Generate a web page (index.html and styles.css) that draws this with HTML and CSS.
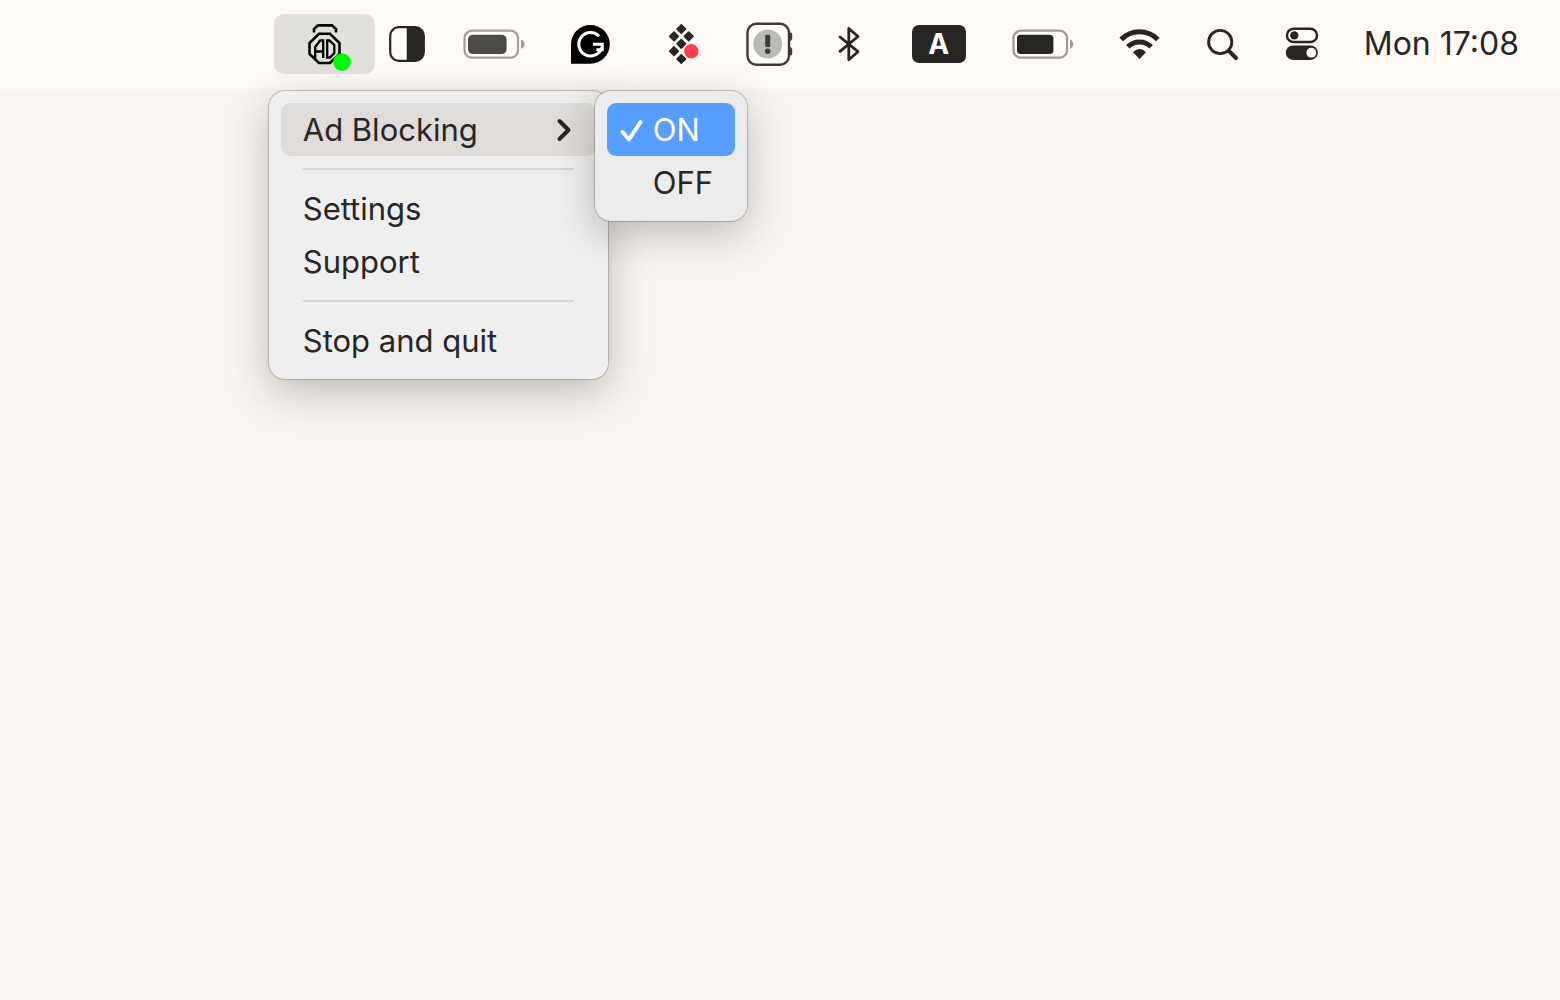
FILE: index.html
```html
<!DOCTYPE html>
<html lang="en">
<head>
    <meta charset="UTF-8">
    <title>Ad Blocking</title>
    <link rel="stylesheet" href="styles.css">
</head>
<body>
    <header class="menubar">
        <div class="tray-app">
            <button class="tray-btn active" type="button" aria-label="Ad blocker" aria-expanded="true">
                <svg width="35" height="42" viewBox="0 0 35 42" fill="none" stroke="#000" stroke-width="2.6">
                    <path d="M7 9.500V6l4-3.600h14L29 6v3.500"/>
                    <path d="M12 10.800h11L32.500 20v11L23 40H12L2.500 31V20z"/>
                    <path stroke-width="2.300" d="M8.200 35V24l5-6.500h3V35M8.200 28.500h8M20.200 17.500h2.300L27.300 22v8l-4.300 4.500h-2.800z"/>
                    <circle cx="35" cy="39" r="8.800" fill="#00fb00" stroke="none"/>
                </svg>
            </button>
            <ul class="menu">
                <li class="has-sub">
                    <button class="menu-item open" type="button" aria-expanded="true">
                        Ad Blocking
                        <svg class="arrow" width="19" height="24" viewBox="0 0 19 24" fill="none" stroke="#272625" stroke-width="4" stroke-linecap="round" stroke-linejoin="round">
                            <path d="M4.500 3l9 9-9 9"/>
                        </svg>
                    </button>
                    <ul class="menu submenu">
                        <li>
                            <button class="menu-item selected" type="button">
                                <svg class="check" width="24" height="24" viewBox="0 0 24 24" fill="none" stroke="#fff" stroke-width="4" stroke-linecap="round" stroke-linejoin="round">
                                    <path d="M2.500 14l6.500 7.500L20.500 4"/>
                                </svg>
                                ON
                            </button>
                        </li>
                        <li><button class="menu-item" type="button">OFF</button></li>
                    </ul>
                </li>
                <li><hr></li>
                <li><button class="menu-item" type="button">Settings</button></li>
                <li><button class="menu-item" type="button">Support</button></li>
                <li><hr></li>
                <li><button class="menu-item" type="button">Stop and quit</button></li>
            </ul>
        </div>
        <button class="tray-btn compact" type="button" aria-label="Window">
            <svg width="36" height="36" viewBox="0 0 36 36">
                <rect x="1.200" y="1.200" width="33.600" height="33.600" rx="8.500" fill="#fefcf9" stroke="#272625" stroke-width="2.200"/>
                <path fill="#272625" d="M17.700 1H27a8 8 0 0 1 8 8v18a8 8 0 0 1-8 8h-9.300z"/>
            </svg>
        </button>
        <button class="tray-btn" type="button" aria-label="Device battery">
            <svg width="62" height="30" viewBox="0 0 62 30">
                <rect x="1.500" y="1.700" width="53.500" height="27" rx="7.500" fill="#fefcf9" stroke="#a3a09c" stroke-width="2.200"/>
                <rect x="5" y="5.700" width="38.600" height="19.400" rx="5" fill="#4d4b49"/>
                <path fill="#a3a09c" d="M58 10.500q3.600 1.500 3.600 4.700T58 19.800z"/>
            </svg>
        </button>
        <button class="tray-btn" type="button" aria-label="Grammar checker">
            <svg width="39" height="39" viewBox="0 0 39 39">
                <path d="M0 38.700V19.300a19.400 19.400 0 1 1 19.400 19.400z"/>
                <path fill="none" stroke="#fff" stroke-width="3" d="M28 11.200A11.700 11.700 0 1 0 30.800 22.300M22 19.300h10.800M31.300 19.300v5.500h-6"/>
            </svg>
        </button>
        <button class="tray-btn" type="button" aria-label="Setapp">
            <svg width="44" height="42" viewBox="0 0 44 42">
                <path fill="#272625" stroke="#272625" stroke-width="1.600" stroke-linejoin="round" d="M25.300 1.700l4.300 4.300-4.300 4.300L21 6zM18 9.100l4.300 4.300-4.300 4.300-4.300-4.300zM32.700 9.100l4.300 4.300-4.300 4.300-4.300-4.300zM25.300 16.500l4.300 4.300-4.300 4.300-4.300-4.300zM18 23.900l4.300 4.300-4.300 4.300-4.300-4.300zM25.300 31.700l4.300 4.300-4.300 4.300L21 36z"/>
                <circle cx="35.300" cy="28.300" r="7.800" fill="#ff3f4d" stroke="#fef5f0" stroke-width="1.200"/>
            </svg>
        </button>
        <button class="tray-btn" type="button" aria-label="Disk alert">
            <svg width="46" height="44" viewBox="0 0 46 44">
                <path fill="#3d3b3a" d="M43 10.500h1.500q1.700 0 1.700 2v4.500l-1.500 2H43zM43 25h1.700l1.500 2v4.500q0 2-1.700 2H43z"/>
                <rect x="1.500" y="1.700" width="41.500" height="41" rx="9" fill="#fefcf9" stroke="#3d3b3a" stroke-width="2.400"/>
                <circle cx="21.800" cy="22" r="14.500" fill="#bcbab7"/>
                <rect x="19.200" y="12.800" width="5" height="12.200" rx="1" fill="#3d3b3a"/>
                <circle cx="21.700" cy="29.300" r="2.700" fill="#3d3b3a"/>
            </svg>
        </button>
        <button class="tray-btn" type="button" aria-label="Bluetooth">
            <svg width="28" height="36" viewBox="0 0 28 36" fill="none" stroke="#272625" stroke-width="2.800" stroke-linecap="round" stroke-linejoin="round">
                <path d="M2 11l18 14.700-9.200 8V2.500l9.200 8L2 25.300"/>
            </svg>
        </button>
        <button class="tray-btn" type="button" aria-label="Input source A">
            <span class="input-source">A</span>
        </button>
        <button class="tray-btn" type="button" aria-label="Battery">
            <svg width="61" height="30" viewBox="0 0 61 30">
                <rect x="1.500" y="1.700" width="53.500" height="27" rx="7.500" fill="#fefcf9" stroke="#9d9a97" stroke-width="2.200"/>
                <rect x="5" y="5.700" width="36.400" height="19.400" rx="3.500" fill="#272625"/>
                <path fill="#9d9a97" d="M58 10.500q3.200 1.500 3.200 4.700T58 19.800z"/>
            </svg>
        </button>
        <button class="tray-btn" type="button" aria-label="Wi-Fi">
            <svg width="41" height="32" viewBox="0 0 41 32" fill="none" stroke="#272625" stroke-width="5">
                <path d="M2.200 11.500A25.500 25.500 0 0 1 38.800 11.500"/>
                <path d="M8.800 18.800A16.500 16.500 0 0 1 32.200 18.800"/>
                <path fill="#272625" stroke="none" d="M14 24.300q6.500-6.600 13 0l-6.500 6.700z"/>
            </svg>
        </button>
        <button class="tray-btn" type="button" aria-label="Search">
            <svg width="33" height="32" viewBox="0 0 33 32" fill="none" stroke="#272625" stroke-linecap="round">
                <circle cx="14.200" cy="14" r="11.600" stroke-width="2.900"/>
                <path stroke-width="4" d="M23.500 23.500l6.500 6.500"/>
            </svg>
        </button>
        <button class="tray-btn" type="button" aria-label="Control Center">
            <svg width="33" height="34" viewBox="0 0 33 34">
                <rect x="2" y="1.700" width="30" height="13.400" rx="6.700" fill="#fefcf9" stroke="#272625" stroke-width="2.500"/>
                <circle cx="9.300" cy="8.400" r="4.200" fill="#272625"/>
                <rect x=".8" y="18.500" width="32" height="14.400" rx="7.200" fill="#272625"/>
                <circle cx="26.300" cy="25.700" r="4.900" fill="#fefcf9"/>
            </svg>
        </button>
        <button class="tray-btn clock" type="button">Mon 17:08</button>
    </header>
</body>
</html>
```
FILE: styles.css
```css
*{
    box-sizing: border-box;
    padding:0;
    margin:0;
}
body{
    min-height:100vh;
    background: #faf5f0;
    color:#272625;
    font-family: Inter, "Liberation Sans", sans-serif;
    font-size:31px;
    line-height:36px;
}
ul{
    list-style: none;
}
button{
    border:0;
    background: none;
    color:inherit;
    font:inherit;
    text-align: left;
    white-space: nowrap;
}
svg{
    display: block;
    flex-shrink: 0;
    overflow: visible;
}
.menubar{
    display: flex;
    justify-content: flex-end;
    align-items: center;
    padding:14px 18px 15px;
    background: #fefaf5;
}
.tray-app{
    position: relative;
}
.tray-btn{
    display: flex;
    align-items: center;
    height:60px;
    padding:0 23px;
}
.tray-btn.active{
    padding:0 33px;
    border-radius: 10px;
    background: #e2e0dc;
}
.tray-btn.compact{
    padding:0 15px 0 14px;
}
.tray-btn.clock{
    font-size:32px;
}
.input-source{
    width:54px;
    height:38px;
    border-radius: 7px;
    background: #272625;
    color:#fff;
    font-size:28px;
    font-weight: 700;
    line-height:38px;
    text-align: center;
}
.menu{
    position: absolute;
    top:77px;
    left:-5px;
    width:339px;
    padding:12px;
    border-radius: 16px;
    background: #efefef;
    box-shadow: 0 0 0 1px rgba(0,0,0,.2), 0 12px 40px rgba(40,30,25,.28);
}
.has-sub{
    position: relative;
}
.menu .submenu{
    top:-12px;
    left:314px;
    width:152px;
    background: #ececec;
}
.menu-item{
    display: flex;
    align-items: center;
    width:100%;
    height:53px;
    padding:0 22px;
    border-radius: 9px;
}
.menu-item.open{
    background: #dfdcd9;
}
.menu-item.selected{
    background: #569eff;
    color:#fff;
}
.arrow{
    margin-left:auto;
}
.submenu .menu-item{
    padding-left:46px;
}
.submenu .selected{
    gap:9px;
    padding-left:13px;
}
.menu hr{
    height:2px;
    margin:12px 22px;
    border:0;
    background: #d5d5d5;
}
```
